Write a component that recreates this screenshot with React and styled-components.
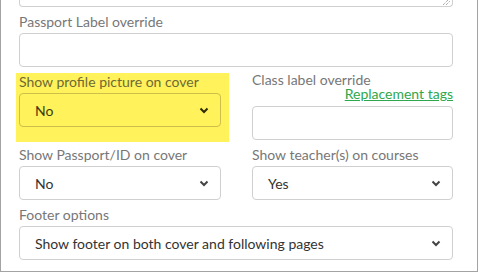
import React from 'react';
import styled, { createGlobalStyle } from 'styled-components';

const GlobalStyle = createGlobalStyle`
  html, body {
    margin: 0;
    padding: 0;
    background: #fff;
  }
  body {
    font-family: Lato, "Open Sans", Arial, sans-serif;
  }
`;

const Frame = styled.div`
  box-sizing: border-box;
  width: 478px;
  height: 272px;
  border: 1px solid #a3a3a3;
  border-top: none;
  padding: 0 24px 0 18px;
  overflow: hidden;
`;

const TextareaStub = styled.div`
  position: relative;
  box-sizing: border-box;
  height: 7px;
  border: 1px solid #d0d0d0;
  border-top: none;
  border-radius: 0 0 4px 4px;
`;

const ResizeGrip = styled.svg`
  position: absolute;
  right: 2px;
  bottom: 1px;
`;

const Grid = styled.div`
  display: grid;
  grid-template-columns: 202px 201px;
  column-gap: 31px;
  row-gap: 6px;
  margin-top: 6px;
`;

const Field = styled.div`
  display: flex;
  flex-direction: column;
  align-self: start;
  grid-column: ${p => (p.$wide ? '1 / span 2' : 'auto')};
  ${p => p.$highlight && `
    background: #fff25a;
    margin: 0 -8px -15px -3px;
    padding: 0 8px 15px 3px;
  `}
`;

const Label = styled.label`
  font-size: 14px;
  line-height: ${p => (p.$tight ? '13px' : '17px')};
  color: ${p => (p.$highlight ? '#6e6a35' : '#777')};
  margin-bottom: ${p => (p.$tight ? '0' : '3px')};
`;

const TagLink = styled.a`
  align-self: flex-end;
  font-size: 14px;
  line-height: 13px;
  margin: 1px 0 6px;
  color: #2ea84c;
  text-decoration: underline;
  cursor: pointer;
`;

const Input = styled.input`
  box-sizing: border-box;
  height: 34px;
  width: 100%;
  border: 1px solid #d0d0d0;
  border-radius: 4px;
  background: #fff;
  margin: 0;
`;

const SelectWrap = styled.div`
  position: relative;
`;

const Select = styled.select`
  box-sizing: border-box;
  appearance: none;
  width: 100%;
  height: 34px;
  margin: 0;
  padding: 0 30px 0 15px;
  font-family: Lato, "Open Sans", Arial, sans-serif;
  font-size: 14px;
  color: ${p => (p.$highlight ? '#3d3a12' : '#333')};
  background: ${p => (p.$highlight ? 'transparent' : '#fff')};
  border: 1px solid ${p => (p.$highlight ? '#cdbf4a' : '#d0d0d0')};
  border-radius: 4px;
`;

const Chevron = styled.svg`
  position: absolute;
  right: 12px;
  top: 50%;
  margin-top: -3px;
  pointer-events: none;
`;

function Dropdown({ value, options, highlight }) {
  return (
    <SelectWrap>
      <Select defaultValue={value} $highlight={highlight}>
        {options.map(o => (
          <option key={o} value={o}>{o}</option>
        ))}
      </Select>
      <Chevron width="10" height="7" viewBox="0 0 10 7">
        <path d="M1.5 1.5 L5 5 L8.5 1.5" fill="none" stroke={highlight ? '#2e2b08' : '#444'} strokeWidth="2" />
      </Chevron>
    </SelectWrap>
  );
}

export default function App() {
  return (
    <>
      <GlobalStyle />
      <Frame>
        <TextareaStub>
          <ResizeGrip width="9" height="6" viewBox="0 0 9 6">
            <path d="M2 6 L8 0 M5 6 L9 2" stroke="#888" strokeWidth="1" strokeDasharray="1 1" />
          </ResizeGrip>
        </TextareaStub>
        <Grid>
          <Field $wide>
            <Label>Passport Label override</Label>
            <Input type="text" />
          </Field>

          <Field $highlight>
            <Label $highlight>Show profile picture on cover</Label>
            <Dropdown value="No" options={['Yes', 'No']} highlight />
          </Field>

          <Field>
            <Label $tight>Class label override</Label>
            <TagLink>Replacement tags</TagLink>
            <Input type="text" />
          </Field>

          <Field>
            <Label>Show Passport/ID on cover</Label>
            <Dropdown value="No" options={['Yes', 'No']} />
          </Field>

          <Field>
            <Label>Show teacher(s) on courses</Label>
            <Dropdown value="Yes" options={['Yes', 'No']} />
          </Field>

          <Field $wide>
            <Label>Footer options</Label>
            <Dropdown
              value="Show footer on both cover and following pages"
              options={[
                'Show footer on both cover and following pages',
                'Show footer on cover only',
                'Show footer on following pages only',
                'No footer',
              ]}
            />
          </Field>
        </Grid>
      </Frame>
    </>
  );
}
